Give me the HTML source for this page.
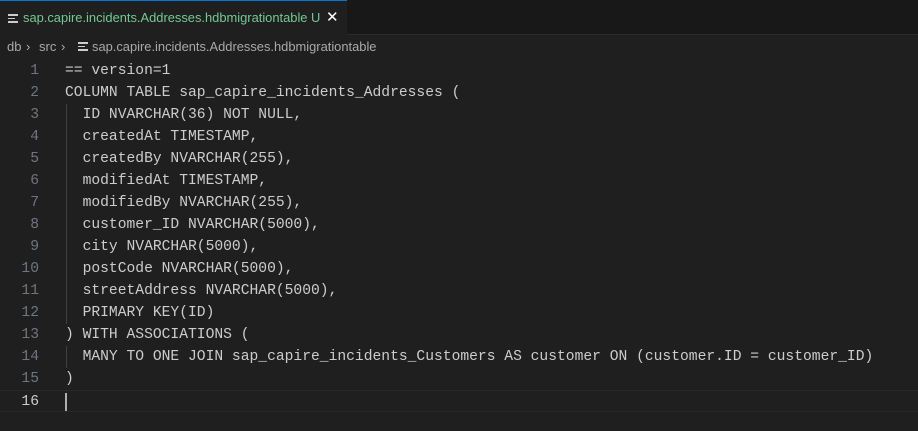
<!DOCTYPE html>
<html><head><style>
body{margin:0;width:918px;height:431px;background:#1f1f1f;overflow:hidden;font-family:"Liberation Sans",sans-serif;}
.tabs{position:absolute;left:0;top:0;width:918px;height:35px;background:#181818;border-bottom:1px solid #2b2b2b;box-sizing:border-box}
.tab{position:absolute;left:0;top:0;width:347px;height:35px;background:#1f1f1f;border-top:1px solid #0078d4;box-sizing:border-box;color:#73c991;font-size:12.9px;line-height:34px}
.tab .n{position:absolute;left:23px;top:0}
.tab .u{position:absolute;left:311px;top:0}
.tab .x{position:absolute;left:326px;top:0;color:#fff;font-size:15px}
.ico{position:absolute;width:10px}
.ico i{display:block;height:1.5px;background:#ccc;margin-bottom:2px}
.bc{position:absolute;top:37px;color:#a9a9a9;font-size:13px;line-height:20px;white-space:pre}
.code{position:absolute;top:60px;left:0;font-family:"Liberation Mono",monospace;font-size:14.65px;color:#cccccc}
.l{height:22px;line-height:22px;position:relative;white-space:pre}
.ln{position:absolute;right:879px;color:#6e7681;text-align:right}
.t{position:absolute;left:65px}
.g{position:absolute;left:66px;top:0;height:22px;border-left:1px solid #404040}
.cur{border-top:1px solid #282828;border-bottom:1px solid #282828;box-sizing:border-box}
</style></head><body>
<div class="tabs"><div class="tab">
<div class="ico" style="left:8px;top:13px"><i></i><i style="width:7px"></i><i></i></div>
<span class="n">sap.capire.incidents.Addresses.hdbmigrationtable</span><span class="u">U</span><span class="x">✕</span></div></div>
<div class="bc" style="left:7px">db</div>
<div class="bc" style="left:26px">›</div>
<div class="bc" style="left:39px">src</div>
<div class="bc" style="left:61px">›</div>
<div class="bc" style="left:92px;font-size:12.9px">sap.capire.incidents.Addresses.hdbmigrationtable</div>
<div class="ico" style="left:78px;top:42px"><i></i><i style="width:7px"></i><i></i></div>
<div class="code">
<div class="l"><span class="ln">1</span><span class="t">== version=1</span></div>
<div class="l"><span class="ln">2</span><span class="t">COLUMN TABLE sap_capire_incidents_Addresses (</span></div>
<div class="l"><span class="ln">3</span><span class="g"></span><span class="t">  ID NVARCHAR(36) NOT NULL,</span></div>
<div class="l"><span class="ln">4</span><span class="g"></span><span class="t">  createdAt TIMESTAMP,</span></div>
<div class="l"><span class="ln">5</span><span class="g"></span><span class="t">  createdBy NVARCHAR(255),</span></div>
<div class="l"><span class="ln">6</span><span class="g"></span><span class="t">  modifiedAt TIMESTAMP,</span></div>
<div class="l"><span class="ln">7</span><span class="g"></span><span class="t">  modifiedBy NVARCHAR(255),</span></div>
<div class="l"><span class="ln">8</span><span class="g"></span><span class="t">  customer_ID NVARCHAR(5000),</span></div>
<div class="l"><span class="ln">9</span><span class="g"></span><span class="t">  city NVARCHAR(5000),</span></div>
<div class="l"><span class="ln">10</span><span class="g"></span><span class="t">  postCode NVARCHAR(5000),</span></div>
<div class="l"><span class="ln">11</span><span class="g"></span><span class="t">  streetAddress NVARCHAR(5000),</span></div>
<div class="l"><span class="ln">12</span><span class="g"></span><span class="t">  PRIMARY KEY(ID)</span></div>
<div class="l"><span class="ln">13</span><span class="t">) WITH ASSOCIATIONS (</span></div>
<div class="l"><span class="ln">14</span><span class="g"></span><span class="t">  MANY TO ONE JOIN sap_capire_incidents_Customers AS customer ON (customer.ID = customer_ID)</span></div>
<div class="l"><span class="ln">15</span><span class="t">)</span></div>
<div class="l cur" style="width:918px"><span class="ln" style="color:#ccc">16</span><span style="position:absolute;left:65px;top:2px;width:2px;height:18px;background:#aeafad"></span></div>
</div>
</body></html>
